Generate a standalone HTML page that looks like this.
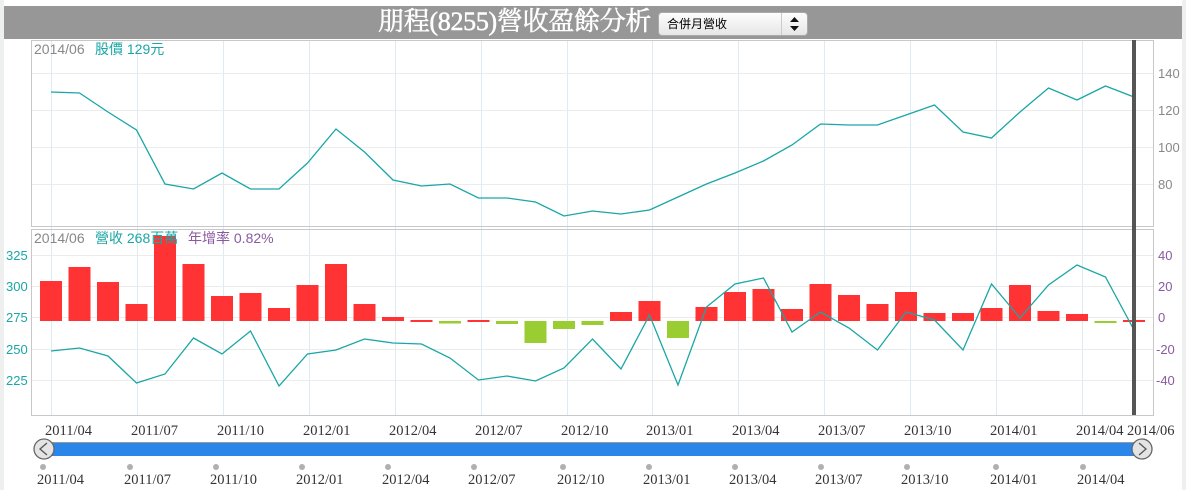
<!DOCTYPE html>
<html><head><meta charset="utf-8"><style>
body{margin:0;background:#eef0ef;width:1186px;height:490px;overflow:hidden;font-family:"Liberation Sans","Noto Sans CJK TC",sans-serif}
#p{position:absolute;left:4px;top:0;width:1178px;height:490px;background:#fff}
#hd{position:absolute;left:4px;top:6px;width:1178px;height:33px;background:#979797}
#tt{position:absolute;left:378px;top:7px;font-family:"Liberation Serif","Noto Serif CJK SC",serif;font-size:26px;color:#fff;line-height:30px;-webkit-text-stroke:0.5px #fff;white-space:nowrap;letter-spacing:-0.3px}
#sel{position:absolute;left:658px;top:12px;width:148px;height:22px;background:linear-gradient(#fdfdfd,#e6e6e6);border:1px solid #aaa;border-radius:4px;font-size:12px;line-height:22px}
#sel span{position:absolute;left:8px}
#sel i{position:absolute;right:0;top:0;width:25px;height:22px;border-left:1px solid #ccc}
svg{position:absolute;left:0;top:0}
</style></head><body>
<div id="p"></div>
<div id="hd"></div>
<div id="tt">朋程(8255)營收盈餘分析</div>
<div id="sel"><span>合併月營收</span><i><svg width="25" height="22"><path d="M8 9 L12.5 4 L17 9Z M8 13 L12.5 18 L17 13Z" fill="#111"/></svg></i></div>
<svg width="1186" height="490" id="s" font-family="Liberation Sans,Noto Sans CJK TC,sans-serif">
<g stroke="#dcecf2" stroke-width="1">
<path d="M51.5 41V415M137.5 41V415M223.5 41V415M309.5 41V415M395.5 41V415M481.5 41V415M567.5 41V415M652.5 41V415M738.5 41V415M824.5 41V415M910.5 41V415M996.5 41V415M1082.5 41V415"/>
</g>
<g stroke="#ececec"><path d="M32 73.5H1153M32 110.5H1153M32 147.5H1153M32 184.5H1153M32 255.5H1153M32 286.5H1153M32 317.5H1153M32 349.5H1153M32 380.5H1153"/></g>
<rect x="31.5" y="40.5" width="1122" height="186" fill="none" stroke="#c8c8c8"/>
<rect x="31.5" y="229.5" width="1122" height="186" fill="none" stroke="#c8c8c8"/>
<g id="bars"></g>
<polyline fill="none" stroke="#1aa6a6" stroke-width="1.3" points="51,92 79.5,93 108,112 136.5,130 165,184 193.5,189 222,173 250.5,189 279,189 307.5,163 336,129 364.5,152 393,180 421.5,186 450,184 478.5,198 507,198 535.5,202 564,216 592.5,211 621,214 649.5,210 678,197 706.5,184 735,173 763.5,161 792,145 820.5,124 849,125 877.5,125 906,115 934.5,105 963,132 991.5,138 1020,112 1048.5,88 1077,100 1105.5,86 1134,97"/>
<polyline fill="none" stroke="#1aa6a6" stroke-width="1.3" points="51,351 79.5,348 108,356 136.5,383 165,374 193.5,338 222,354 250.5,331 279,386 307.5,354 336,350 364.5,339 393,343 421.5,344 450,358 478.5,380 507,376 535.5,381 564,368 592.5,339 621,369 649.5,315 678,385 706.5,307 735,284 763.5,278 792,332 820.5,312 849,328 877.5,350 906,312 934.5,320 963,350 991.5,284 1020,318 1048.5,285 1077,265 1105.5,277 1134,330"/>
<rect x="1132" y="40" width="4" height="375" fill="#555"/>
<g font-size="14" fill="#888"><text x="34" y="54">2014/06</text><text x="34" y="243">2014/06</text></g>
<text x="95" y="54" font-size="14" fill="#1aa6a6">股價 129元</text>
<text x="95" y="243" font-size="14" fill="#1aa6a6">營收 268百萬</text>
<text x="188" y="243" font-size="14" fill="#8a5aa0">年增率 0.82%</text>
<g font-size="13" fill="#888"><text x="1158" y="78">140</text><text x="1158" y="115">120</text><text x="1158" y="152">100</text><text x="1158" y="189">80</text></g>
<g font-size="13" fill="#8a5aa0"><text x="1158" y="260">40</text><text x="1158" y="291">20</text><text x="1158" y="322">0</text><text x="1156" y="354">-20</text><text x="1156" y="385">-40</text></g>
<g font-size="13" fill="#1aa6a6"><text x="6" y="260">325</text><text x="6" y="291">300</text><text x="6" y="322">275</text><text x="6" y="354">250</text><text x="6" y="385">225</text></g>
<g font-size="14.5" fill="#333" font-family="Liberation Serif,serif">
<text x="45" y="435">2011/04</text><text x="131" y="435">2011/07</text><text x="217" y="435">2011/10</text><text x="303" y="435">2012/01</text><text x="389" y="435">2012/04</text><text x="475" y="435">2012/07</text><text x="561" y="435">2012/10</text><text x="646" y="435">2013/01</text><text x="732" y="435">2013/04</text><text x="818" y="435">2013/07</text><text x="904" y="435">2013/10</text><text x="990" y="435">2014/01</text><text x="1076" y="435">2014/04</text><text x="1127" y="435">2014/06</text>
</g>
<rect x="44" y="443" width="1098" height="13" fill="#2b86ea"/>
<path d="M44 442.5H1142" stroke="#999"/>
<circle cx="44" cy="449" r="10" fill="#e4e4e4" stroke="#666" stroke-width="1.3"/>
<path d="M47 443L40 449L47 455" fill="none" stroke="#555" stroke-width="1.3"/>
<circle cx="1142" cy="449" r="10" fill="#e4e4e4" stroke="#666" stroke-width="1.3"/>
<path d="M1139 443L1146 449L1139 455" fill="none" stroke="#555" stroke-width="1.3"/>
<g fill="#b0b0b0"><circle cx="43" cy="467" r="3"/><circle cx="130" cy="467" r="3"/><circle cx="216" cy="467" r="3"/><circle cx="302" cy="467" r="3"/><circle cx="388" cy="467" r="3"/><circle cx="474" cy="467" r="3"/><circle cx="563" cy="467" r="3"/><circle cx="649" cy="467" r="3"/><circle cx="735" cy="467" r="3"/><circle cx="821" cy="467" r="3"/><circle cx="907" cy="467" r="3"/><circle cx="996" cy="467" r="3"/><circle cx="1083" cy="467" r="3"/></g>
<g font-size="14.5" fill="#333" font-family="Liberation Serif,serif">
<text x="37" y="484">2011/04</text><text x="124" y="484">2011/07</text><text x="210" y="484">2011/10</text><text x="296" y="484">2012/01</text><text x="382" y="484">2012/04</text><text x="468" y="484">2012/07</text><text x="557" y="484">2012/10</text><text x="643" y="484">2013/01</text><text x="729" y="484">2013/04</text><text x="815" y="484">2013/07</text><text x="901" y="484">2013/10</text><text x="990" y="484">2014/01</text><text x="1077" y="484">2014/04</text>
</g>
</svg>
<script>
var t=[281,267,282,304,236,264,296,293,308,285,264,304,317,320,323.5,320,324,343,329,325,312,301,338,307,292,289,309,284,295,304,292,313,313,308,285,311,314,323,320];
var g=document.getElementById('bars'),B=321,h='';
t.forEach(function(y,i){var x=51+28.5*i-11;var up=y<B;var top=up?y:B,ht=Math.max(2,Math.abs(y-B));
h+='<rect x="'+x+'" y="'+top+'" width="22" height="'+ht+'" fill="'+(up?'#ff3333':'#9acd32')+'"/>';});
g.innerHTML=h;
</script>
</body></html>
